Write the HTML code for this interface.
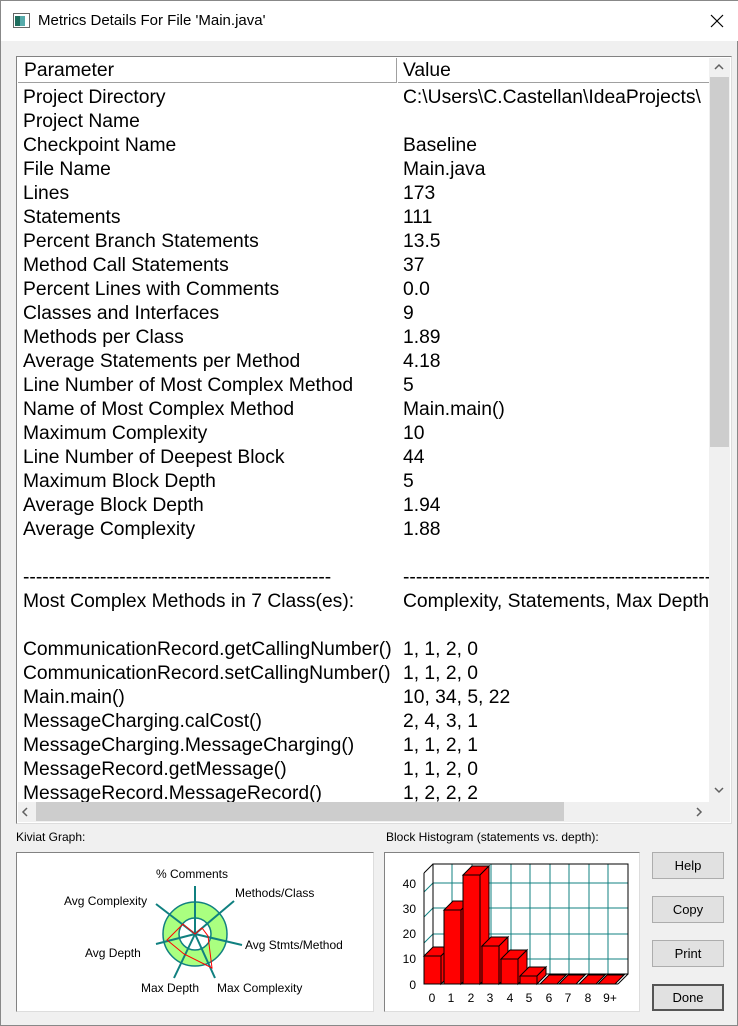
<!DOCTYPE html>
<html><head><meta charset="utf-8"><style>
*{margin:0;padding:0;box-sizing:border-box}
body{width:738px;height:1026px;background:#f0f0f0;font-family:"Liberation Sans",Arial,sans-serif;position:relative;overflow:hidden;border:1px solid #888}
.a{position:absolute;white-space:nowrap}
.r{position:absolute;font-size:19.3px;line-height:24px;white-space:nowrap;color:#000}
.btn{position:absolute;left:651px;width:72px;height:27px;background:#e1e1e1;border:1px solid #adadad;font-size:13px;text-align:center;line-height:25px}
.sm{font-size:12px;position:absolute;white-space:nowrap}
</style></head><body>
<div class="a" style="left:0;top:0;width:738px;height:40px;background:#fff"></div>
<svg class="a" style="left:12px;top:12px" width="18" height="16"><rect x="0.5" y="0.5" width="16" height="14" fill="#fff" stroke="#666"/><rect x="2" y="3" width="5" height="10" fill="#1e6e5e"/><rect x="7" y="3" width="5" height="10" fill="#5aa"/></svg>
<div class="a" style="left:37px;top:11px;font-size:15px">Metrics Details For File 'Main.java'</div>
<svg class="a" style="left:709px;top:13px" width="14" height="14"><path d="M1 1L13 13M13 1L1 13" stroke="#000" stroke-width="1.2"/></svg>

<div class="a" style="left:15px;top:55px;width:716px;height:768px;background:#fff;border:1px solid #828282;border-right-color:#ddd;border-bottom-color:#ddd"></div>
<div class="a" style="left:17px;top:57px;width:691px;height:25px;border-bottom:1px solid #a0a0a0"></div>
<div class="a" style="left:395px;top:57px;width:2px;height:25px;background:#a0a0a0;border-right:1px solid #fff"></div>
<div class="r" style="left:23px;top:58px">Parameter</div>
<div class="r" style="left:402px;top:58px">Value</div>
<div class="a" style="left:708px;top:57px;width:21px;height:744px;background:#f0f0f0"></div>
<div class="a" style="left:709px;top:76px;width:19px;height:370px;background:#cdcdcd"></div>
<svg class="a" style="left:712px;top:62px" width="12" height="8"><path d="M2 6L6 2L10 6" stroke="#606060" stroke-width="1.5" fill="none"/></svg>
<svg class="a" style="left:712px;top:785px" width="12" height="8"><path d="M2 2L6 6L10 2" stroke="#606060" stroke-width="1.5" fill="none"/></svg>
<div class="a" style="left:17px;top:801px;width:712px;height:20px;background:#f0f0f0"></div>
<div class="a" style="left:35px;top:801px;width:528px;height:19px;background:#cdcdcd"></div>
<svg class="a" style="left:20px;top:805px" width="8" height="12"><path d="M6 2L2 6L6 10" stroke="#606060" stroke-width="1.5" fill="none"/></svg>
<svg class="a" style="left:694px;top:805px" width="8" height="12"><path d="M2 2L6 6L2 10" stroke="#606060" stroke-width="1.5" fill="none"/></svg>

<div style="position:absolute;left:0;top:0;width:708px;height:801px;overflow:hidden">
<div class="r" style="left:22px;top:85px">Project Directory<br>Project Name<br>Checkpoint Name<br>File Name<br>Lines<br>Statements<br>Percent Branch Statements<br>Method Call Statements<br>Percent Lines with Comments<br>Classes and Interfaces<br>Methods per Class<br>Average Statements per Method<br>Line Number of Most Complex Method<br>Name of Most Complex Method<br>Maximum Complexity<br>Line Number of Deepest Block<br>Maximum Block Depth<br>Average Block Depth<br>Average Complexity<br>&nbsp;<br>------------------------------------------------<br>Most Complex Methods in 7 Class(es):<br>&nbsp;<br>CommunicationRecord.getCallingNumber()<br>CommunicationRecord.setCallingNumber()<br>Main.main()<br>MessageCharging.calCost()<br>MessageCharging.MessageCharging()<br>MessageRecord.getMessage()<br>MessageRecord.MessageRecord()</div>
<div class="r" style="left:402px;top:85px">C:\Users\C.Castellan\IdeaProjects\<br>&nbsp;<br>Baseline<br>Main.java<br>173<br>111<br>13.5<br>37<br>0.0<br>9<br>1.89<br>4.18<br>5<br>Main.main()<br>10<br>44<br>5<br>1.94<br>1.88<br>&nbsp;<br>------------------------------------------------------------<br>Complexity, Statements, Max Depth<br>&nbsp;<br>1, 1, 2, 0<br>1, 1, 2, 0<br>10, 34, 5, 22<br>2, 4, 3, 1<br>1, 1, 2, 1<br>1, 1, 2, 0<br>1, 2, 2, 2</div>
</div>

<div class="sm" style="left:15px;top:829px">Kiviat Graph:</div>
<div class="a" style="left:15px;top:851px;width:358px;height:160px;background:#fff;border:1px solid #828282;border-right-color:#ddd;border-bottom-color:#ddd"></div>
<svg class="a" style="left:0;top:820px" width="380" height="200">
<g transform="translate(0,-820)">
<circle cx="194" cy="933" r="24" fill="none" stroke="#aaff80" stroke-width="15"/>
<circle cx="194" cy="933" r="32" fill="none" stroke="#108080" stroke-width="1.5"/>
<circle cx="194" cy="933" r="16" fill="none" stroke="#108080" stroke-width="1.5"/>
<g stroke="#108080" stroke-width="2">
<line x1="194" y1="933" x2="194" y2="885"/><line x1="194" y1="933" x2="233" y2="900"/><line x1="194" y1="933" x2="241" y2="944"/><line x1="194" y1="933" x2="214" y2="977"/><line x1="194" y1="933" x2="173" y2="977"/><line x1="194" y1="933" x2="155" y2="943"/><line x1="194" y1="933" x2="155" y2="903"/></g>
<polygon points="194,933 201,927 207,935 211,967 183,953 166,939 182,923" fill="none" stroke="red" stroke-width="1"/>
</g></svg>
<div class="sm" style="left:155px;top:866px">% Comments</div>
<div class="sm" style="left:234px;top:885px">Methods/Class</div>
<div class="sm" style="left:244px;top:937px">Avg Stmts/Method</div>
<div class="sm" style="left:216px;top:980px">Max Complexity</div>
<div class="sm" style="left:140px;top:980px">Max Depth</div>
<div class="sm" style="left:84px;top:945px">Avg Depth</div>
<div class="sm" style="left:63px;top:893px">Avg Complexity</div>

<div class="sm" style="left:385px;top:829px">Block Histogram (statements vs. depth):</div>
<div class="a" style="left:383px;top:851px;width:256px;height:160px;background:#fff;border:1px solid #828282;border-right-color:#ddd;border-bottom-color:#ddd"></div>
<svg class="a" style="left:380px;top:820px" width="260" height="200">
<g transform="translate(-380,-820)" font-family="Liberation Sans,Arial,sans-serif" font-size="12">
<g stroke="#108080" stroke-width="1">
<line x1="432" y1="882" x2="627" y2="882"/><line x1="432" y1="907" x2="627" y2="907"/><line x1="432" y1="933" x2="627" y2="933"/><line x1="432" y1="958" x2="627" y2="958"/>
<line x1="423" y1="891" x2="432" y2="882"/><line x1="423" y1="916" x2="432" y2="907"/><line x1="423" y1="942" x2="432" y2="933"/><line x1="423" y1="967" x2="432" y2="958"/>
<line x1="451" y1="863" x2="451" y2="973"/><line x1="471" y1="863" x2="471" y2="973"/><line x1="490" y1="863" x2="490" y2="973"/><line x1="510" y1="863" x2="510" y2="973"/><line x1="529" y1="863" x2="529" y2="973"/><line x1="549" y1="863" x2="549" y2="973"/><line x1="568" y1="863" x2="568" y2="973"/><line x1="588" y1="863" x2="588" y2="973"/><line x1="607" y1="863" x2="607" y2="973"/>
</g>
<rect x="432" y="863" width="195" height="110" fill="none" stroke="#000"/>
<line x1="423" y1="872" x2="432" y2="863" stroke="#000"/>
<line x1="423" y1="872" x2="423" y2="983" stroke="#000"/>
<line x1="423" y1="983" x2="617" y2="983" stroke="#000"/>
<line x1="617" y1="983" x2="627" y2="973" stroke="#000"/>
<g fill="red" stroke="#000" stroke-width="1">
<path d="M423 955h17l9-9h-17z"/><path d="M440 955l9-9v28l-9 9z"/><rect x="423" y="955" width="17" height="28"/>
<path d="M443 909h17l9-9h-17z"/><path d="M460 909l9-9v74l-9 9z"/><rect x="443" y="909" width="17" height="74"/>
<path d="M462 874h17l9-9h-17z"/><path d="M479 874l9-9v109l-9 9z"/><rect x="462" y="874" width="17" height="109"/>
<path d="M481 945h17l9-9h-17z"/><path d="M498 945l9-9v38l-9 9z"/><rect x="481" y="945" width="17" height="38"/>
<path d="M500 958h17l9-9h-17z"/><path d="M517 958l9-9v25l-9 9z"/><rect x="500" y="958" width="17" height="25"/>
<path d="M519 975h17l9-9h-17z"/><path d="M536 975l9-9v8l-9 9z"/><rect x="519" y="975" width="17" height="8"/>
<path d="M539 983h17l9-9h-17z"/><path d="M558 983h17l9-9h-17z"/><path d="M578 983h17l9-9h-17z"/><path d="M597 983h17l9-9h-17z"/>
</g>
<g fill="#000" text-anchor="end"><text x="415" y="887">40</text><text x="415" y="912">30</text><text x="415" y="937">20</text><text x="415" y="962">10</text><text x="415" y="988">0</text></g>
<g fill="#000" text-anchor="middle"><text x="431" y="1001">0</text><text x="450" y="1001">1</text><text x="470" y="1001">2</text><text x="489" y="1001">3</text><text x="509" y="1001">4</text><text x="528" y="1001">5</text><text x="548" y="1001">6</text><text x="567" y="1001">7</text><text x="587" y="1001">8</text><text x="609" y="1001">9+</text></g>
</g></svg>

<div class="btn" style="top:851px">Help</div>
<div class="btn" style="top:895px">Copy</div>
<div class="btn" style="top:939px">Print</div>
<div class="btn" style="top:983px;border:2px solid #555;line-height:23px">Done</div>
</body></html>
